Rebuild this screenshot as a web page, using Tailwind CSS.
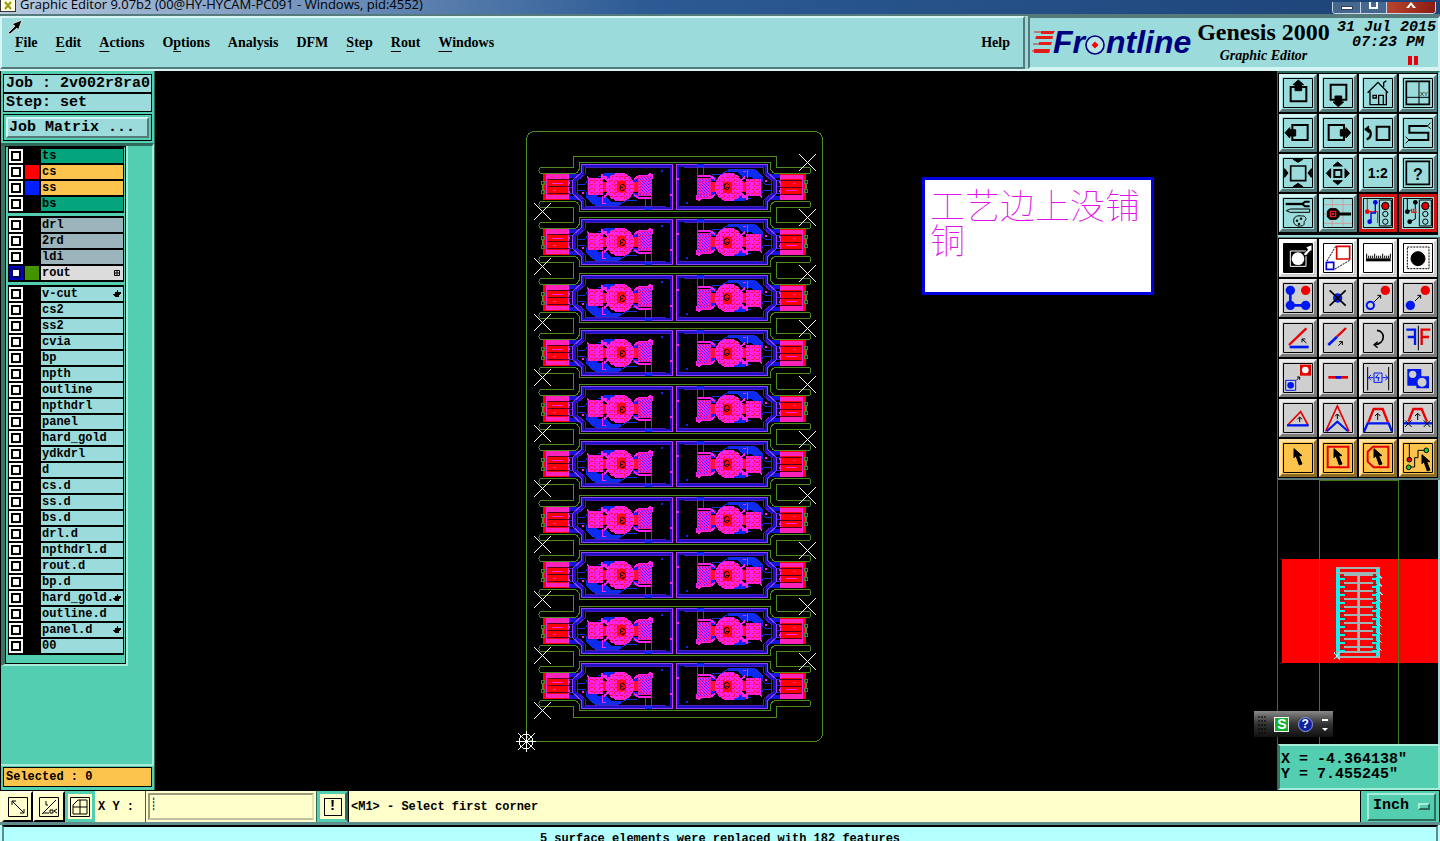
<!DOCTYPE html>
<html lang="en">
<head>
    <meta charset="UTF-8" />
    <meta name="viewport" content="width=device-width, initial-scale=1" />
    <title>Graphic Editor 9.07b2</title>
    <script src="https://cdn.jsdelivr.net/npm/@tailwindcss/browser@4"></script>
</head>
<body class="flex h-screen flex-col overflow-hidden bg-black text-black">

    <!-- Window title -->
    <div class="flex h-[14px] shrink-0 items-end justify-between overflow-hidden bg-linear-to-r from-[#b9cbe0] via-[#2b5a94] via-45% to-[#1d4377] pr-1">
        <div class="flex items-end gap-1">
            <svg class="h-[14px] w-4" viewBox="0 0 16 14"><path d="M0 0h16v12H0z" fill="#333"/><path d="M1 0h14v11H1z" fill="#fdfde0"/><path d="M5 2l6 7M11 2L5 9" stroke="#9a9a10" stroke-width="2"/></svg>
            <h1 class="h-[14px] font-['Open_Sans',sans-serif] text-[13px] leading-[8px] whitespace-nowrap">Graphic Editor 9.07b2 (00@HY-HYCAM-PC091 - Windows, pid:4552)</h1>
        </div>
        <div class="flex h-[12px] overflow-hidden rounded-b border border-t-0 border-[#c8d8ea]">
            <button aria-label="Minimize" class="flex w-[28px] items-center justify-center border-r border-[#c8d8ea] bg-[#46688f]"><span class="h-1 w-3 border border-gray-700 bg-white"></span></button>
            <button aria-label="Restore" class="flex w-[26px] items-start justify-center border-r border-[#c8d8ea] bg-[#46688f]"><span class="h-[7px] w-[9px] border-2 border-t-0 border-white"></span></button>
            <button aria-label="Close" class="flex w-[48px] items-start justify-center bg-linear-to-r from-[#b8452f] to-[#8c1c10]"><svg class="h-[6px] w-3" viewBox="0 0 12 6"><path d="M6 0L1 6h3l2-3 2 3h3z" fill="#fff"/></svg></button>
        </div>
    </div>

    <!-- Menu bar and product panel -->
    <header class="flex h-[57px] shrink-0 border-y-2 border-t-[#557a7c] border-b-[#d4f5f3] bg-[#9bdbdb] font-['Liberation_Serif',serif] font-bold">
        <nav class="flex flex-1 items-center justify-between border-2 border-t-[#d4f5f3] border-r-[#557a7c] border-b-[#557a7c] border-l-[#d4f5f3] px-[13px] text-[14px] leading-4">
            <div id="menu" class="relative flex gap-[18px]">
                <svg class="absolute -top-4 -left-2 size-4" viewBox="0 0 16 16"><path d="M15 1L5 5l3 2-7 7 2 1 7-6 1 3z" fill="#000" stroke="#fff" stroke-width=".7"/></svg>
                <button><u class="underline-offset-4">F</u>ile</button>
                <button><u class="underline-offset-4">E</u>dit</button>
                <button><u class="underline-offset-4">A</u>ctions</button>
                <button>O<u class="underline-offset-4">p</u>tions</button>
                <button>Analysis</button>
                <button>DFM</button>
                <button><u class="underline-offset-4">S</u>tep</button>
                <button><u class="underline-offset-4">R</u>out</button>
                <button><u class="underline-offset-4">W</u>indows</button>
            </div>
            <button>Help</button>
        </nav>
        <div class="ml-[3px] flex w-[412px] shrink-0 border-2 border-[#557a7c] border-r-[#d4f5f3] border-b-[#d4f5f3]">
            <svg class="h-[46px] w-[166px] shrink-0" viewBox="1030 18 166 46" role="img" aria-label="Frontline">
                <g fill="#f01818"><path d="M1041 31h14l-2 3h-12zM1036 36h17l-1 3h-16zM1039 42h13l-1 3h-12zM1034 49h16l-1 4h-15z"/></g>
                <g stroke="#c22" stroke-width="1"><path d="M1034 32h20M1035 38h18M1033 44h18M1032 51h18"/></g>
                <g fill="#00007e" font-family="Liberation Sans, sans-serif" font-weight="bold" font-style="italic" font-size="32">
                    <text x="1053" y="53">Fr</text><text x="1106" y="53">ntline</text>
                </g>
                <circle cx="1095" cy="45" r="9" fill="#b6e6e6" stroke="#00007e" stroke-width="1.600"/>
                <path d="M1095 41.500l3.500 3.500-3.500 3.500-3.500-3.500z" fill="#f00"/>
            </svg>
            <div class="flex w-[135px] shrink-0 flex-col items-center whitespace-nowrap">
                <div class="text-2xl leading-7">Genesis 2000</div>
                <div class="text-[14px] leading-5 italic">Graphic Editor</div>
            </div>
            <div class="flex flex-1 flex-col items-end pr-0.5 font-['Liberation_Mono',monospace] text-[15px] leading-[15px] whitespace-nowrap italic">
                <div class="pt-0.5">31 Jul 2015</div>
                <div class="pr-3">07:23 PM</div>
                <div class="mt-1.5 mr-[18px] flex h-[9px] gap-0.5"><i class="w-1 bg-red-600"></i><i class="w-1 bg-red-600"></i></div>
            </div>
        </div>
    </header>

    <main class="flex min-h-0 flex-1">
        <!-- Job and layers -->
        <aside class="flex w-[155px] shrink-0 flex-col border-x border-l-black border-r-[#2d6a5c] bg-[#54ceb0] font-['Liberation_Mono',monospace] font-bold">
            <div class="mx-0.5 mt-[3px] border border-black bg-[#9bdbdb] pl-0.5 text-[15px] leading-[17px] whitespace-nowrap">Job : 2v002r8ra0</div>
            <div class="mx-0.5 border border-black bg-[#9bdbdb] pl-0.5 text-[15px] leading-[17px]">Step: set</div>
            <div class="mx-0.5 mt-0.5 border border-black p-0.5">
                <button class="flex h-[21px] w-full items-center border-2 border-t-[#d4f5f3] border-r-[#557a7c] border-b-[#557a7c] border-l-[#d4f5f3] bg-[#9bdbdb] pl-px text-left text-[15px] leading-4">Job Matrix ...</button>
            </div>
            <div class="mt-0.5 flex flex-1 flex-col border-t-[3px] border-r-2 border-b-2 border-t-[#2d6a5c] border-r-[#a6ecd9] border-b-[#a6ecd9]">
                <div class="w-[127px] border-r-2 border-b-2 border-l-4 border-r-[#a6ecd9] border-b-[#a6ecd9] border-l-[#3a7466]">
                    <div id="layers" class="flex flex-col gap-[3px] border border-black pr-px pb-2 pl-0.5 text-[12px] leading-[14px]"></div>
                </div>
            </div>
            <div class="mx-0.5 mt-px mb-[3px] border border-black bg-[#fcc44c] pl-0.5 text-[12px] leading-[18px]">Selected : 0</div>
        </aside>

        <!-- Drawing area -->
        <section class="relative min-w-0 flex-1 bg-black">
            <svg id="board" class="h-full w-full" viewBox="155 71 1122 719" preserveAspectRatio="xMidYMid meet" shape-rendering="crispEdges" fill="none">
                <defs>
                    <pattern id="hatch" width="3" height="3" patternUnits="userSpaceOnUse"><path d="M0 0h3v3H0z" fill="#ff22e8"/><path d="M0 0h1v1H0zM1 1h1v1H1zM2 2h1v1H2z" fill="#4020ff"/></pattern>
                    <pattern id="comb" width="5" height="4" patternUnits="userSpaceOnUse"><path d="M0 0h5v4H0z" fill="#ff22e0"/><path d="M0 1h3v1H0zM4 2h1v2H4z" fill="#ff1048"/></pattern>
                    <g id="half">
                        <!-- edge connector -->
                        <path d="M543-13h26v26h-26z" fill="#ff0000"/>
                        <path d="M546-13h23v5h-23zM546 8h23v4h-23z" fill="#ff22b8"/>
                        <path d="M546.500-12v24M552-3.500h11M553 3.500h3M568.500-12v24" stroke="#ff22e8"/>
                        <path d="M547-7.500h22M547-.5h22M547 6.500h22" stroke="#500020"/>
                        <path d="M569-13h9v4h-9zM569 9h9v4h-9z" fill="#1414d8"/>
                        <path d="M569-6.500h5M569 .5h5M569 6.500h5" stroke="#1a2cff"/>
                        <!-- board frame -->
                        <path d="M671.500-21.500h-89v7l-8 8v13l8 8v7h89z" stroke="#1c12c8" stroke-width="3"/>
                        <path d="M672.500-22.500h-91v8l-9 8v13l9 8v8h91z" stroke="#9040ff"/>
                        <path d="M670.500-19.500h-85v6l-8 7v13l8 7v6h80" stroke="#5018c0"/>
                        <path d="M672.500-22v45" stroke="#c040f0"/>
                        <!-- copper traces -->
                        <path d="M586 6h8l4 4h9l4 5h10v3h-26l-9-7z" fill="#0a28f8"/>
                        <path d="M601-9l3-5h15l4 3v3h-20zM634-9h6v4h-6zM633 6h6v4h-6z" fill="#0a28f8"/>
                        <path d="M577-3h8l4-5h14M577 3h7l5 5v5l6 5h24l8-5h10M598-11h10M590 9l8 7h22" stroke="#1430e0"/>
                        <path d="M587-9h4v18h-4z" fill="#1818c0"/>
                        <path d="M645.500 10v12M651.500 8v14" stroke="#d01040"/>
                        <path d="M645 20h7v3h-7zM661-17h2v2h-2z" fill="#0a28f8"/>
                        <!-- parts -->
                        <path d="M588-9h15v17h-15z" fill="url(#comb)"/>
                        <path d="M591-6l9 11M600-6l-9 11M589 8v-3M602 9v8M589-8l-2-3M603 16h3" stroke="#ff22e8"/>
                        <path d="M603-5h6v10h-6zM631-5h7v10h-7z" fill="#ff1038"/>
                        <path d="M603-10l6 4M604 10l5-4M602-13v3h5M634-8l5-3h11v-3M634 8l5 3h12M648-12h4v4" stroke="#ff22e8" stroke-width="2"/>
                        <circle cx="620" cy="0" r="14" fill="url(#comb)"/>
                        <circle cx="620" cy="0" r="14" stroke="#ff22e8" stroke-dasharray="3 2"/>
                        <path d="M606-3h5v9h-5M614-11v4M618-12v5M623-12v6M614 8v4M619 9v4M625 8v4" stroke="#ff22e8"/>
                        <path d="M617-6h9v11h-9z" fill="#ff0818"/>
                        <path d="M622-3l-2 2v3l2 2 3-2v-3zM620 0h3" stroke="#300010"/>
                        <path d="M638-11h13v19h-13z" fill="url(#hatch)"/>
                        <path d="M638.500-10.500h13v19h-13zM640-7h9v13h-9z" stroke="#f018a0"/>
                        <path d="M670 7h2v2h-2zM568-5h2v2h-2zM568 4h2v2h-2zM582 5h2v2h-2z" fill="#ff22e8"/>
                        <path d="M541.500-5.500h3v3h-1v6h1v3h-3v-3h1v-6h-1z" stroke="#4c8c1c"/>
                    </g>
                    <g id="row">
                        <use href="#half"/>
                        <use href="#half" transform="rotate(180 674.500 0)"/>
                        <path d="M573.500-19.500H542a3 3 0 0 0 0 6h31q5 0 6.500-5v-6h191v6q1.500 5 6.500 5h31a3 3 0 0 0 0-6h-31.500M776.500 20.500H808a3 3 0 0 0 0-6h-31q-5 0-6.500 5v5h-191v-5q-1.500-5-6.500-5h-31a3 3 0 0 0 0 6h31.500" stroke="#4c8c1c"/>
                        <path d="M534 16l17 17M551 16l-17 17M799-33l17 17M816-33l-17 17" stroke="#fff"/>
                    </g>
                </defs>
                <rect x="526.500" y="131.500" width="296" height="610" rx="8" stroke="#4c8c1c"/>
                <path d="M573.500 168v-11.500h203V168M573.500 706v11.500h203V706" stroke="#4c8c1c"/>
                <g id="rows"></g>
                <g stroke="#fff"><circle cx="526" cy="741.500" r="7"/><path d="M516 741.500h20M526.500 731v21M518 733l17 17M535 733l-17 17"/></g>
            </svg>

            <div class="absolute top-[106px] left-[767px] h-[118px] w-[232px] border-[3px] border-[#0000e0] bg-white px-[5px] pt-1.5 font-['Noto_Sans_CJK_SC',sans-serif] text-[35px] leading-[35px] font-thin text-[#e010e8]" lang="zh">工艺边上没铺铜</div>

            <!-- Input method bar -->
            <div class="absolute right-[-56px] bottom-[53px] z-10 flex h-[26px] w-[79px] items-center justify-between bg-linear-to-b from-[#8a8a8a] via-[#333] to-[#111] px-1">
                <svg class="h-5 w-2" viewBox="0 0 8 20"><path d="M1 2v18M4 2v18M7 2v18" stroke="#000" stroke-dasharray="2 2"/></svg>
                <button class="size-[15px] border border-white bg-[#16b030] font-['Liberation_Sans',sans-serif] text-[14px] leading-[13px] font-bold text-white">S</button>
                <button class="size-[15px] rounded-full border border-[#8aa0e0] bg-[#1020a0] font-['Liberation_Sans',sans-serif] text-[12px] leading-[13px] font-bold text-white">?</button>
                <svg class="h-4 w-2" viewBox="0 0 8 16"><path d="M1 3h6v2H1zM1 12h6l-3 3z" fill="#fff"/></svg>
            </div>
        </section>

        <!-- Tools, overview and cursor position -->
        <aside class="flex w-[163px] shrink-0 flex-col border-l border-[#2d6a5c] bg-black">
            <div id="viewTools" class="grid grid-cols-4 border-t-2 border-r-2 border-b-2 border-t-[#2d6a5c] border-r-[#9bdbdb] border-b-[#9bdbdb] pb-0.5"></div>
            <div id="editTools" class="grid grid-cols-4 border-t border-r-2 border-b-2 border-[#5f7878]"></div>
            <svg id="overview" class="min-h-0 w-full flex-1 border-r-2 border-[#9bdbdb]" viewBox="0 0 160 262" preserveAspectRatio="xMidYMid slice" shape-rendering="crispEdges" fill="none">
                <path d="M5 78h155v104H5z" fill="#f00"/>
                <path d="M41.500 0v262M120.500 0v262M41 .5h79" stroke="#3f7a14"/>
                <path d="M60 88v87M100 88v87" stroke="#14f0f0" stroke-width="4"/>
                <path d="M58 87.500h44M58 92.500h44M58 175.500h44M58 170.500h44M80.500 92v80" stroke="#9fb4b4" stroke-width="2"/>
                <g id="overviewRows"></g>
                <path d="M56 171l6 7M62 171l-6 7" stroke="#8ff"/>
            </svg>
            <div class="border-2 border-t-[#a6ecd9] border-r-[#a6ecd9] border-b-[#a6ecd9] border-l-[#3a7466] bg-[#54ceb0] py-1.5 pl-px font-['Liberation_Mono',monospace] text-[15px] leading-[15px] font-bold whitespace-pre"><div>X = -4.364138"</div><div>Y = 7.455245"</div></div>
        </aside>
    </main>

    <!-- Command line -->
    <form class="flex h-8 shrink-0 items-stretch border-t border-black bg-[#ffffcb] font-['Liberation_Mono',monospace] text-[12px] font-bold">
        <button type="button" aria-label="Free angle" class="ml-0.5 flex w-[31px] items-center justify-center border-2 border-t-[#fffff0] border-r-black border-b-black border-l-[#fffff0]"><svg class="size-5" viewBox="0 0 20 20" fill="none" stroke="#000"><path d="M.5.500h19v19H.5zM4 4l12 12M4 8V4h4M16 12v4h-4"/></svg></button>
        <button type="button" aria-label="Line and arc" class="flex w-8 items-center justify-center border-2 border-t-[#fffff0] border-r-black border-b-black border-l-[#fffff0]"><svg class="size-5" viewBox="0 0 20 20" fill="none" stroke="#000"><path d="M.5.500h19v19H.5zM3 17L17 3M7 4v4h2M4 16h6M11 13h3v3h-3zM18 12l-3 2 3 2"/></svg></button>
        <button type="button" aria-label="Grid" class="flex w-[30px] items-center justify-center border-[3px] border-[#54ceb0]"><svg class="size-5" viewBox="0 0 20 20" fill="none" stroke="#000"><path d="M.5.500h19v19H.5zM3 8l5-5h9v14H3zM10 3v14M3 10h14"/></svg></button>
        <label for="xy" class="flex w-[50px] items-center pl-[3px] whitespace-nowrap">X Y :</label>
        <div class="w-[172px] border-x border-[#2d6a5c] p-0.5">
            <input id="xy" type="text" class="h-full w-full border-2 border-[#9a9a7c] border-r-[#e4e4b8] border-b-[#c0c09c] bg-[#ffffcb] pb-1 outline-none placeholder:text-black" placeholder="┊" />
        </div>
        <button type="button" class="flex w-[31px] items-center justify-center border-[3px] border-[#54ceb0] border-r-[#2d6a5c]"><span class="size-[18px] border border-black text-[15px] leading-4">!</span></button>
        <output class="flex flex-1 items-center border-l border-black pl-0.5">&lt;M1&gt; - Select first corner</output>
        <div class="flex w-[80px] items-center border-x border-black bg-[#54ceb0] pl-1.5">
            <button type="button" class="flex h-7 w-[69px] items-center justify-between border-2 border-t-[#a6ecd9] border-r-[#2d6a5c] border-b-[#2d6a5c] border-l-[#a6ecd9] pr-1 pl-1 text-[15px]">Inch <span class="h-[7px] w-3 border-2 border-t-[#a6ecd9] border-r-[#2d6a5c] border-b-[#2d6a5c] border-l-[#a6ecd9]"></span></button>
        </div>
    </form>

    <!-- Status line -->
    <footer class="h-[19px] shrink-0 overflow-hidden border-t-[3px] border-[#5f8c8c] bg-[#b4ffff] px-0.5">
        <div class="h-[30px] border-2 border-t-black border-r-[#5f8c8c] border-l-[#5f8c8c] pt-[5px] text-center font-['Liberation_Mono',monospace] text-[12px] leading-[14px] font-bold">5 surface elements were replaced with 182 features</div>
    </footer>

    <script>
        // name, name background, swatch, mark at the right
        const groups = [
            [['ts', 'bg-[#04a57c]'], ['cs', 'bg-[#fcc44c]', 'bg-[#ff0000]'], ['ss', 'bg-[#fcc44c]', 'bg-[#0020ff]'], ['bs', 'bg-[#04a57c]']],
            [['drl', 'bg-[#9cb4bc]'], ['2rd', 'bg-[#9cb4bc]'], ['ldi', 'bg-[#9cb4bc]'], ['rout', 'bg-[#dcdcdc]', 'bg-[#449400]', 'grid']],
            ['v-cut*', 'cs2', 'ss2', 'cvia', 'bp', 'npth', 'outline', 'npthdrl', 'panel', 'hard_gold', 'ydkdrl', 'd', 'cs.d', 'ss.d', 'bs.d', 'drl.d', 'npthdrl.d', 'rout.d', 'bp.d', 'hard_gold.*', 'outline.d', 'panel.d*', '00']
                .map(n => [n.replace('*', ''), 'bg-[#9bdbdb]', '', n.includes('*') ? 'hand' : ''])
        ];
        const marks = {
            grid: '<svg class="h-[7px] w-[7px]" viewBox="0 0 7 7" fill="none" stroke="#000"><path d="M.5.500h5v5h-5zM3 0v6M0 3h6"/></svg>',
            hand: '<svg class="h-2 w-2" viewBox="0 0 8 8"><path d="M4 0h1v2h3v2H7v1H6v2H2V6H1V5H0V4h2V2h2z"/></svg>'
        };
        document.getElementById('layers').innerHTML = groups.map(rows => `
            <div class="border border-black bg-black">${rows.map(([name, bg, swatch, mark]) => `
                <label class="flex h-4 gap-0.5 py-px">
                    <span class="flex w-[14px] items-center justify-center ${name === 'rout' ? 'bg-[#0000c0]' : 'bg-white'}">
                        <input type="checkbox" class="size-[10px] appearance-none border-2 bg-white ${name === 'rout' ? 'border-[#000060]' : 'border-black'}">
                    </span>
                    <span class="w-[14px] ${swatch || 'bg-black'}"></span>
                    <span class="flex min-w-0 flex-1 items-center justify-between pr-0.5 pl-px ${bg}"><span class="w-0 whitespace-nowrap">${name}</span>${marks[mark] || ''}</span>
                </label>`).join('')}
            </div>`).join('');

        // ten panels, joined by milled slots
        let board = '';
        for (let i = 0; i < 10; i++) {
            const y = 187 + Math.round(i * 55.45);
            board += `<use href="#row" transform="translate(0 ${y})"/>`;
            if (i < 9) board += `<path d="M573.500 ${y + 20}v16M776.500 ${y + 20}v16" stroke="#4c8c1c"/>`;
        }
        document.getElementById('rows').innerHTML = board;

        let mini = '';
        for (let i = 0; i < 10; i++) {
            const y = 95 + i * 8;
            mini += `<path d="M62 ${y + 3}h5M94 ${y + 3}h5" stroke="#14f0f0" stroke-width="2"/><path d="M66 ${y - 1}h29" stroke="#9fb4b4" stroke-width="2"/><path d="M62 ${y + 1}h5M94 ${y + 1}h5M62 ${y + 5}h3M95 ${y + 5}h3" stroke="#6a3030"/><path d="M101 ${y}l3 3" stroke="#8ff"/>`;
        }
        document.getElementById('overviewRows').innerHTML = mini;

        // icons are drawn on a 90 unit square
        const cursor = 'M33 17v27l6-6 10 28 8-3-10-25h10z';
        const light = '<path d="M49 6h36v78H49z"/><circle cx="67" cy="24" r="11" fill="#e00000"/><circle cx="67" cy="48" r="8"/><circle cx="67" cy="71" r="8"/>';
        const viewIcons = [
            ['Pan up', '<path d="M23 27h47v43H23z" stroke-width="6"/><path d="M46 6L30 20h6v18h20V20h6z" fill="#000"/>'],
            ['Pan down', '<path d="M23 20h47v45H23z" stroke-width="6"/><path d="M46 86L30 72h6V54h20v18h6z" fill="#000"/>'],
            ['Home', '<g stroke-width="4"><path d="M14 44l31-31 30 31M21 40v40h49V40M30 52h10v8H30zM47 80V52h14v28M62 26V14l8-6"/></g>'],
            ['Origin', '<path d="M10 10h69v69H10z" stroke-width="5"/><path d="M48 10v69M10 58h69"/><text x="51" y="53" font-size="18" fill="#000" stroke="none">XY</text>'],
            ['Pan left', '<path d="M28 21h46v45H28z" stroke-width="6"/><path d="M6 44l14-15v6h18v19H20v6z" fill="#000"/>'],
            ['Pan right', '<path d="M17 21h46v45H17z" stroke-width="6"/><path d="M83 44L69 29v6H52v19h17v6z" fill="#000"/>'],
            ['Previous', '<path d="M41 26h38v40H41z" stroke-width="6"/><path d="M12 34c14-2 16 26-1 30" stroke-width="7"/><path d="M5 34l12-10v20z" fill="#000"/>'],
            ['Snake', '<path d="M73 24H19v20h57v22H18" stroke-width="6"/><path d="M73 24l10-10M73 24l10 8M18 66L8 56M18 66L8 76"/>'],
            ['Zoom out', '<path d="M23 24h45v44H23z" stroke-width="5"/><path d="M30 4h30L45 13zM30 86h30L45 76zM5 32v26l10-13zM85 32v26L75 45z" fill="#000"/>'],
            ['Zoom in', '<path d="M34 36h21v21H34z" stroke-width="6"/><path d="M30 24h28L44 12zM30 68h28L44 80zM23 32v28L10 46zM66 32v28l13-14z" fill="#000"/>'],
            ['Scale one to two', '<text x="14" y="60" font-size="42" fill="#000" stroke="none" font-weight="bold">1:2</text>'],
            ['Help', '<path d="M10 10h69v69H10z" stroke-width="5"/><text x="30" y="65" font-size="48" fill="#000" stroke="none" font-weight="bold">?</text>'],
            ['Options', '<path d="M8 18h52" stroke-width="7"/><path d="M80 11H66l-8 7 8 7h14" stroke-width="6"/><path d="M10 38l12-5h58v10H22z"/><path d="M32 68c0-14 14-16 24-14 12-2 16 10 10 14s2 12-8 15c-12 4-26 0-26-15z"/><path d="M40 66h4v4h-4zM52 60h4v4h-4zM46 76h4v4h-4z" fill="#000"/>'],
            ['Grid snap', '<path d="M28 3v84M60 3v84M3 20h84M3 48h84M3 76h84" stroke="#d09c9c"/><path d="M48 48h36" stroke-width="9"/><path d="M20 32h20l8 8v16l-8 8H20l-7-8V40z" fill="#000"/><path d="M22 40h16v16H22zM29 46h3v3h-3z" stroke="#e02020" stroke-width="4"/>'],
            ['Net red', '<path d="M13 3v38M13 41h31v34" stroke="#f00000"/><path d="M37 13v32H24v22" stroke="#0000e0" stroke-width="4"/><circle cx="13" cy="41" r="7" fill="#f00000" stroke="none"/><circle cx="37" cy="13" r="7" fill="#0000e0" stroke="none"/><circle cx="20" cy="71" r="7" fill="#0000e0" stroke="none"/>' + light],
            ['Net black', '<path d="M13 3v38M13 41l10-4M37 13v50l-17 8" stroke-width="3"/><path d="M25 43h16M26 32v10M32 32v10M38 32v10" stroke="#e02020" stroke-width="4"/><g fill="#000" stroke="none"><circle cx="13" cy="41" r="7"/><circle cx="37" cy="13" r="7"/><circle cx="20" cy="71" r="7"/></g>' + light]
        ];
        const editIcons = [
            ['Add feature', '<path d="M3 3h84v84H3z" fill="#000"/><path d="M22 24h47v46H22z" stroke="#fff"/><circle cx="45" cy="47" r="19" fill="#fff" stroke="none"/><path d="M60 34l14-14-6-8 19-7v18l-6 2-12 14z" fill="#fff"/>'],
            ['Resize', '<path d="M41 10h39v38H41z" stroke="#e00000" stroke-width="5"/><path d="M10 58h22v21H10z" stroke="#0000e0" stroke-width="5"/><path d="M12 54l26-44M36 78l44-26" stroke-dasharray="6 3"/>'],
            ['Measure', '<path d="M9 46h74v9H9z" fill="#000" stroke="none"/><path d="M11 32v14M17 38v8M23 38v8M29 38v8M35 32v14M41 38v8M47 38v8M53 38v8M59 32v14M65 38v8M71 38v8M77 38v8M82 32v14"/>'],
            ['Select pad', '<path d="M13 12h65v65H13z" stroke-dasharray="6 3"/><circle cx="45" cy="47" r="21" fill="#000"/>'],
            ['Chain', '<path d="M22 22v45h46" stroke="#0018f0" stroke-width="8"/><g fill="#0018f0" stroke="none"><circle cx="22" cy="22" r="14"/><circle cx="22" cy="67" r="14"/><circle cx="68" cy="67" r="14"/></g><circle cx="68" cy="22" r="14" fill="#f00000" stroke="none"/>'],
            ['Delete', '<circle cx="44" cy="45" r="14" fill="#0018f0" stroke="none"/><path d="M20 22l48 46M68 22L20 68" stroke-width="5"/>'],
            ['Move', '<circle cx="67" cy="22" r="14" fill="#f00000" stroke="none"/><circle cx="22" cy="67" r="11" stroke="#0018f0" stroke-width="6"/><path d="M33 57l20-20M43 37h10v10"/>'],
            ['Copy', '<circle cx="67" cy="22" r="14" fill="#f00000" stroke="none"/><circle cx="22" cy="67" r="14" fill="#0018f0" stroke="none"/><path d="M36 54l17-17M43 37h10v10"/>'],
            ['Rotate line', '<path d="M18 66l52-50" stroke="#e80000" stroke-width="7"/><path d="M20 72h57" stroke="#0018f0" stroke-width="8"/><path d="M70 60L57 48M57 58V48h10"/>'],
            ['Stretch line', '<path d="M42 41l27-26" stroke="#e80000" stroke-width="7"/><path d="M16 66l26-25" stroke="#0018f0" stroke-width="8"/><path d="M46 68l12-12M48 56h10v10"/>'],
            ['Rotate', '<path d="M42 22c26 2 26 40-6 43" stroke-width="5"/><path d="M44 56L33 65l11 9" stroke-width="4"/>'],
            ['Mirror', '<path d="M46 8v74"/><path d="M10 20h26v46M36 42H14" stroke="#0018f0" stroke-width="7"/><path d="M82 20H56v46M56 42h22" stroke="#e80000" stroke-width="7"/>'],
            ['Replace', '<path d="M51 5h33v33H51z" fill="#e80000" stroke="none"/><circle cx="67" cy="21" r="10" fill="#fff" stroke="none"/><path d="M8 52h30v30H8z" stroke="#0018f0"/><circle cx="23" cy="67" r="10" fill="#0018f0" stroke="none"/><path d="M40 52l10-10M42 42h8v8"/>'],
            ['Break', '<path d="M16 43h59" stroke="#e80000" stroke-width="8"/><path d="M38 43h16" stroke="#0018f0" stroke-width="8"/>'],
            ['Spacing', '<path d="M14 12v70M77 12v70"/><g stroke="#0018f0"><path d="M33 30h24v28H33zM46 34l-8 10h12M46 44v10M32 44H17M24 36l-8 8 8 8M58 44h16M67 36l8 8-8 8"/></g>'],
            ['Merge', '<path d="M13 18h42v22h23v36H40V68H13z" fill="#0018f0" stroke="none"/><circle cx="29" cy="34" r="11" fill="#cfcfcf" stroke="none"/><circle cx="57" cy="58" r="15" fill="#cfcfcf" stroke="#0018f0"/>'],
            ['Move triangle', '<path d="M14 66l39-40 22 40" stroke="#e80000" stroke-width="5"/><path d="M12 67h65" stroke="#0018f0" stroke-width="7"/><path d="M50 57V43M43 49l7-7 7 7"/>'],
            ['Move corner', '<path d="M8 85L43 9l35 76" stroke="#e80000" stroke-width="5"/><path d="M11 85l32-29 32 29" stroke="#0018f0" stroke-width="6"/><path d="M43 48V33M36 40l7-7 7 7"/>'],
            ['Move segment', '<path d="M16 58l16-40h27l16 40" stroke="#e80000" stroke-width="7"/><path d="M3 86l11-25h63l10 25" stroke="#0018f0" stroke-width="7"/><path d="M44 51V31M36 39l8-8 8 8"/>'],
            ['Slide segment', '<path d="M16 56l15-38h25l16 38" stroke="#e80000" stroke-width="7"/><path d="M3 61h84" stroke="#0018f0" stroke-width="7"/><path d="M44 51V31M36 39l8-8 8 8M6 52l20 20M26 52L6 72M62 52l20 20M82 52L62 72"/>'],
            ['Select', `<path d="${cursor}" fill="#000"/>`],
            ['Select rectangle', `<path d="M14 11h62v62H14z" stroke="#e80000" stroke-width="6"/><path d="${cursor}" fill="#000"/>`],
            ['Select polygon', `<path d="M30 11h46v62H32L14 56V26z" stroke="#e80000" stroke-width="6"/><path d="${cursor}" fill="#000"/>`],
            ['Select net', `<path d="M19 3v42M17 72h18V44h10V22h18"/><circle cx="19" cy="50" r="7" fill="#e80000"/><circle cx="17" cy="73" r="7" fill="#20d020"/><circle cx="70" cy="22" r="7" fill="#20d020"/><path d="${cursor}" transform="translate(24 18)" fill="#000"/>`]
        ];
        const skins = {
            teal: 'bg-[#9bdbdb] border-t-[#d4f5f3] border-l-[#d4f5f3] border-r-[#557a7c] border-b-[#557a7c]',
            red: 'bg-[#9bdbdb] border-[#d01414]',
            white: 'bg-white border-t-white border-l-white border-r-[#d0d0d0] border-b-[#d0d0d0]',
            grey: 'bg-[#cfcfcf] border-t-[#ececec] border-l-[#ececec] border-r-[#7c7c7c] border-b-[#7c7c7c]',
            amber: 'bg-[#fcc44c] border-t-[#ffe2a4] border-l-[#ffe2a4] border-r-[#8c6c28] border-b-[#8c6c28]'
        };
        const tool = ([label, art], skin) => `
            <div class="flex h-10 items-center justify-center">
                <button aria-label="${label}" class="flex size-[38px] items-center justify-center border-[3px] ${skins[skin]}">
                    <svg class="size-[30px]" viewBox="0 0 90 90" fill="none" stroke="#000" stroke-width="3" font-family="Liberation Sans, sans-serif"><path d="M1.500 1.500h87v87h-87z"/>${art}</svg>
                </button>
            </div>`;
        document.getElementById('viewTools').innerHTML = viewIcons.map((icon, i) => tool(icon, i > 13 ? 'red' : 'teal')).join('');
        document.getElementById('editTools').innerHTML = editIcons.map((icon, i) => tool(icon, i < 4 ? 'white' : i > 19 ? 'amber' : 'grey')).join('');
    </script>
</body>
</html>
